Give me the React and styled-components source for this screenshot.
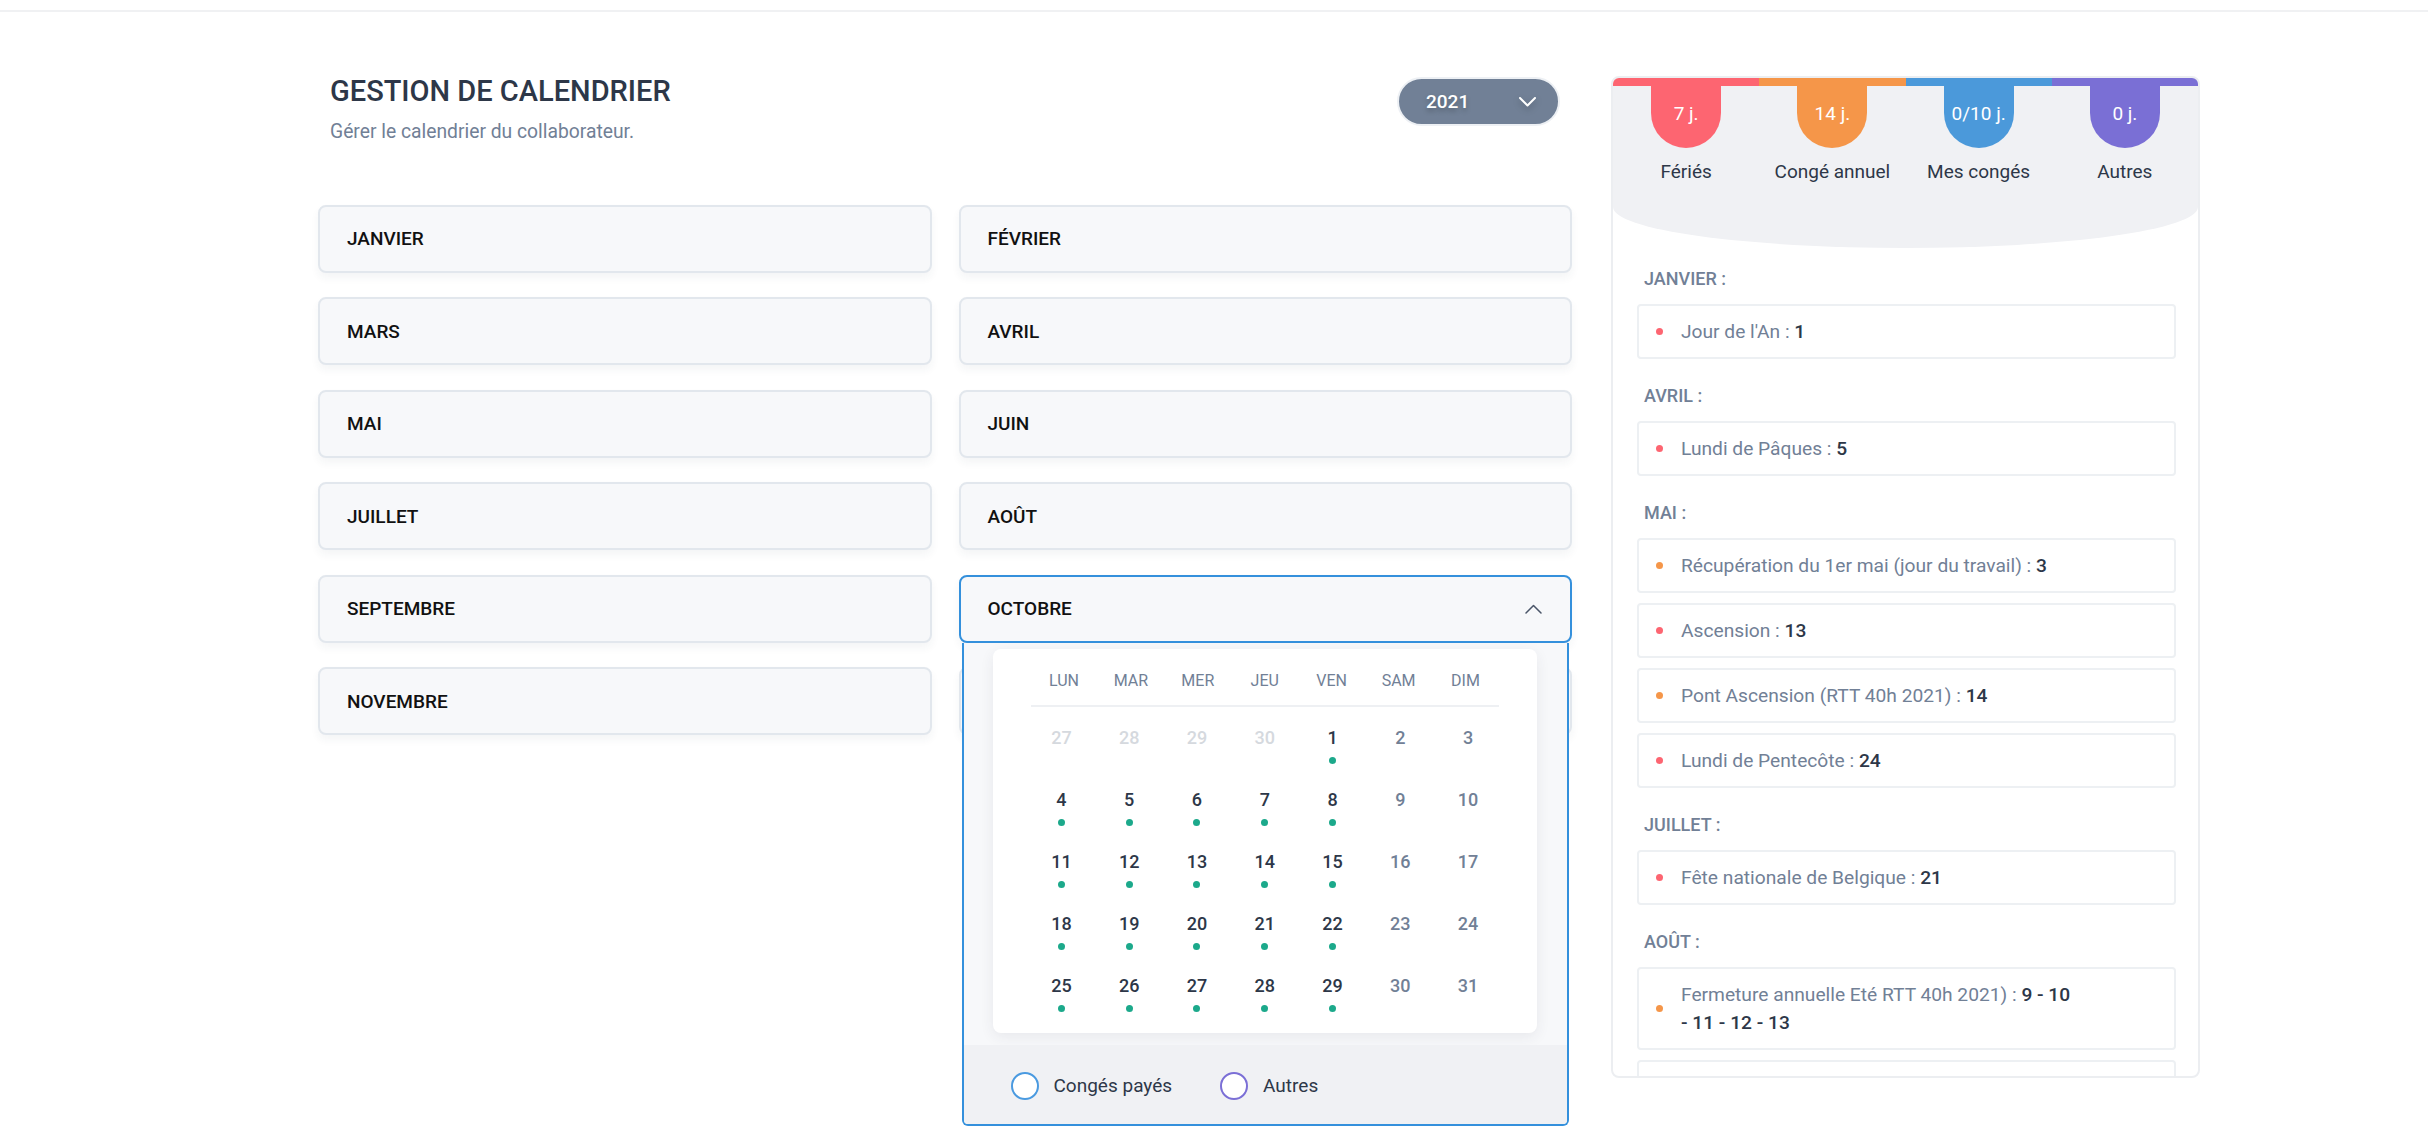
import React from 'react';
import styled, { createGlobalStyle } from 'styled-components';

const GlobalStyle = createGlobalStyle`
  * { box-sizing: border-box; }
  html, body { min-height: 100%; }
  body {
    margin: 0;
    background: #fff;
    font-family: Roboto, "Liberation Sans", sans-serif;
    color: #2d3748;
  }
`;

const Page = styled.div`
  min-height: 1148px;
`;

const TopBar = styled.div`
  height: 12px;
  border-bottom: 2px solid #f0f1f3;
`;

const Main = styled.main`
  display: flex;
  align-items: flex-start;
  gap: 39px;
  padding-left: 318px;
  padding-bottom: 60px;
`;

const LeftCol = styled.section`
  width: 1254px;
  padding-top: 62px;
`;

const Header = styled.header`
  display: flex;
  justify-content: space-between;
  align-items: flex-start;
  padding: 0 12px;
`;

const Title = styled.h1`
  margin: 0;
  font-size: 29px;
  line-height: 34px;
  font-weight: 500;
  color: #2d3748;
`;

const Subtitle = styled.p`
  margin: 13px 0 0;
  font-size: 19.3px;
  line-height: 22px;
  color: #718096;
`;

const YearPill = styled.button`
  margin-top: 3px;
  width: 163px;
  height: 49px;
  border-radius: 25px;
  background: #718096;
  border: 2px solid #edf0f4;
  display: flex;
  align-items: center;
  justify-content: space-between;
  padding: 0 22px 0 27px;
  color: #fff;
  font-family: Roboto, sans-serif;
  font-size: 19px;
  font-weight: 500;
  text-shadow: 0 3px 5px rgba(0, 0, 0, 0.25);

  svg {
    filter: drop-shadow(0 3px 3px rgba(0, 0, 0, 0.25));
  }
`;

const MonthGrid = styled.div`
  margin-top: 61.5px;
  display: grid;
  grid-template-columns: 1fr 1fr;
  column-gap: 27px;
  row-gap: 24.6px;
  grid-auto-rows: 68px;
`;

const MonthCard = styled.div`
  position: relative;
  z-index: ${(p) => (p.$open ? 2 : 1)};
`;

const MonthHead = styled.div`
  height: 68px;
  display: flex;
  align-items: center;
  justify-content: space-between;
  padding: 0 28px 0 27px;
  background: #f7f8fa;
  border: 2px solid ${(p) => (p.$open ? '#3490dc' : '#e2e7ed')};
  border-radius: 8px;
  box-shadow: 0 5px 9px rgba(45, 55, 72, 0.05);
  font-size: 19px;
  font-weight: 500;
  color: #111;
`;

const Dropdown = styled.div`
  position: absolute;
  top: 100%;
  left: 3px;
  right: 3px;
  background: #f7f8fa;
  border: 2px solid #3490dc;
  border-top: none;
  border-radius: 0 0 6px 6px;
`;

const CalendarCard = styled.div`
  margin: 6px 30px 0 29px;
  background: #fff;
  border-radius: 8px;
  box-shadow: 0 4px 14px rgba(45, 55, 72, 0.08);
  padding: 20px 35px 19px;
`;

const WeekRow = styled.div`
  display: grid;
  grid-template-columns: repeat(7, 1fr);
  padding-bottom: 12px;
  border-bottom: 2px solid #eef0f3;
  margin: 0 3px;
`;

const WeekDay = styled.span`
  text-align: center;
  font-size: 16px;
  line-height: 24px;
  color: #718096;
`;

const DaysGrid = styled.div`
  margin-top: 19px;
  display: grid;
  grid-template-columns: repeat(7, 1fr);
  row-gap: 22px;
`;

const DayCell = styled.div`
  height: 40px;
  display: flex;
  flex-direction: column;
  align-items: center;
`;

const DayNum = styled.span`
  font-size: 18px;
  line-height: 24px;
  font-weight: 500;
  color: ${(p) => (p.$kind === 'out' ? '#d5d9de' : p.$kind === 'weekend' ? '#718096' : '#2d3748')};
`;

const DayDot = styled.span`
  margin-top: 7px;
  width: 7px;
  height: 7px;
  border-radius: 50%;
  background: #1ca98b;
`;

const Legend = styled.div`
  margin-top: 12px;
  height: 79px;
  padding: 4px 0 0 47px;
  background: #f0f1f4;
  border-radius: 0 0 4px 4px;
  display: flex;
  align-items: center;
  gap: 48px;
`;

const LegendItem = styled.div`
  display: flex;
  align-items: center;
  gap: 15px;
  font-size: 19px;
  line-height: 28px;
  color: #2d3748;
`;

const LegendCircle = styled.span`
  width: 28px;
  height: 28px;
  border-radius: 50%;
  border: 2px solid ${(p) => p.$color};
  background: #fff;
`;

const Panel = styled.aside`
  width: 589px;
  height: 1002px;
  margin-top: 64px;
  border: 2px solid #eceef1;
  border-radius: 8px;
  overflow: hidden;
  background: #fff;
`;

const Summary = styled.div`
  height: 170px;
  background: #f0f1f4;
  display: grid;
  grid-template-columns: repeat(4, 1fr);
  border-radius: 0 0 50% 50% / 0 0 41px 41px;
`;

const SummaryCol = styled.div`
  display: flex;
  flex-direction: column;
  align-items: center;
  border-top: 8px solid ${(p) => p.$color};
`;

const Badge = styled.div`
  width: 70px;
  height: 62px;
  border-radius: 0 0 35px 35px;
  background: ${(p) => p.$color};
  color: #fff;
  text-align: center;
  padding-top: 16px;
  font-size: 19px;
  line-height: 24px;
`;

const SummaryLabel = styled.div`
  margin-top: 12px;
  font-size: 19px;
  line-height: 24px;
  color: #2d3748;
`;

const List = styled.div`
  padding: 20px 22px 0 24px;
`;

const GroupLabel = styled.div`
  margin: 26px 0 14px 7px;
  font-size: 18px;
  line-height: 22px;
  font-weight: 500;
  color: #718096;

  &:first-child {
    margin-top: 0;
  }
`;

const Items = styled.div`
  display: flex;
  flex-direction: column;
  gap: 10px;
`;

const Item = styled.div`
  min-height: 55px;
  display: flex;
  align-items: center;
  gap: 18px;
  padding: 11.5px 16px 11.5px 17px;
  border: 2px solid #edf0f3;
  border-radius: 4px;
  font-size: 19.2px;
  line-height: 28px;
  color: #718096;
`;

const ItemDot = styled.span`
  flex: none;
  width: 7px;
  height: 7px;
  border-radius: 50%;
  background: ${(p) => p.$color};
`;

const ItemValue = styled.b`
  font-weight: 500;
  color: #2d3748;
`;

const Chevron = ({ up, color = '#fff' }) => (
  <svg width="17" height="10" viewBox="0 0 17 10" fill="none">
    <polyline
      points={up ? '1,9 8.5,1.5 16,9' : '1,1 8.5,8.5 16,1'}
      stroke={color}
      strokeWidth={up ? 1.5 : 2}
      strokeLinecap="round"
      strokeLinejoin="round"
    />
  </svg>
);

const RED = '#fd6571';
const ORANGE = '#f59649';
const BLUE = '#4b99da';
const PURPLE = '#7a6fd5';

const months = [
  'JANVIER', 'FÉVRIER', 'MARS', 'AVRIL', 'MAI', 'JUIN',
  'JUILLET', 'AOÛT', 'SEPTEMBRE', 'OCTOBRE', 'NOVEMBRE', 'DÉCEMBRE',
];

const weekDays = ['LUN', 'MAR', 'MER', 'JEU', 'VEN', 'SAM', 'DIM'];

// octobre 2021 : commence un vendredi
const buildDays = () => {
  const days = [27, 28, 29, 30].map((n) => ({ n, kind: 'out' }));
  for (let n = 1; n <= 31; n++) {
    const col = (n + 3) % 7;
    days.push({ n, kind: col >= 5 ? 'weekend' : 'work' });
  }
  return days;
};

const summary = [
  { value: '7 j.', label: 'Fériés', color: RED },
  { value: '14 j.', label: 'Congé annuel', color: ORANGE },
  { value: '0/10 j.', label: 'Mes congés', color: BLUE },
  { value: '0 j.', label: 'Autres', color: PURPLE },
];

const holidays = [
  { month: 'JANVIER', items: [{ text: "Jour de l'An", value: '1', color: RED }] },
  { month: 'AVRIL', items: [{ text: 'Lundi de Pâques', value: '5', color: RED }] },
  {
    month: 'MAI',
    items: [
      { text: 'Récupération du 1er mai (jour du travail)', value: '3', color: ORANGE },
      { text: 'Ascension', value: '13', color: RED },
      { text: 'Pont Ascension (RTT 40h 2021)', value: '14', color: ORANGE },
      { text: 'Lundi de Pentecôte', value: '24', color: RED },
    ],
  },
  { month: 'JUILLET', items: [{ text: 'Fête nationale de Belgique', value: '21', color: RED }] },
  {
    month: 'AOÛT',
    items: [
      { text: 'Fermeture annuelle Eté RTT 40h 2021)', value: ['9 - 10', '- 11 - 12 - 13'], color: ORANGE },
      { text: 'Assomption', value: '15', color: RED },
    ],
  },
];

const CalendarDropdown = () => (
  <Dropdown>
    <CalendarCard>
      <WeekRow>
        {weekDays.map((d) => (
          <WeekDay key={d}>{d}</WeekDay>
        ))}
      </WeekRow>
      <DaysGrid>
        {buildDays().map((d, i) => (
          <DayCell key={i}>
            <DayNum $kind={d.kind}>{d.n}</DayNum>
            {d.kind === 'work' && <DayDot />}
          </DayCell>
        ))}
      </DaysGrid>
    </CalendarCard>
    <Legend>
      <LegendItem>
        <LegendCircle $color="#4a9ae0" />
        <span>Congés payés</span>
      </LegendItem>
      <LegendItem>
        <LegendCircle $color="#7b6fd6" />
        <span>Autres</span>
      </LegendItem>
    </Legend>
  </Dropdown>
);

const App = () => {
  const openMonth = 'OCTOBRE';

  return (
    <Page>
      <GlobalStyle />
      <TopBar />
      <Main>
        <LeftCol>
          <Header>
            <div>
              <Title>GESTION DE CALENDRIER</Title>
              <Subtitle>Gérer le calendrier du collaborateur.</Subtitle>
            </div>
            <YearPill>
              2021
              <Chevron />
            </YearPill>
          </Header>

          <MonthGrid>
            {months.map((m) => {
              const open = m === openMonth;
              return (
                <MonthCard key={m} $open={open}>
                  <MonthHead $open={open}>
                    {m}
                    {open && <Chevron up color="#4a5568" />}
                  </MonthHead>
                  {open && <CalendarDropdown />}
                </MonthCard>
              );
            })}
          </MonthGrid>
        </LeftCol>

        <Panel>
          <Summary>
            {summary.map((s) => (
              <SummaryCol key={s.label} $color={s.color}>
                <Badge $color={s.color}>{s.value}</Badge>
                <SummaryLabel>{s.label}</SummaryLabel>
              </SummaryCol>
            ))}
          </Summary>
          <List>
            {holidays.map((g) => (
              <React.Fragment key={g.month}>
                <GroupLabel>{g.month} :</GroupLabel>
                <Items>
                  {g.items.map((it) => (
                    <Item key={it.text}>
                      <ItemDot $color={it.color} />
                      <span>
                        {it.text} :{' '}
                        {Array.isArray(it.value) ? (
                          <ItemValue>
                            {it.value[0]}
                            <br />
                            {it.value[1]}
                          </ItemValue>
                        ) : (
                          <ItemValue>{it.value}</ItemValue>
                        )}
                      </span>
                    </Item>
                  ))}
                </Items>
              </React.Fragment>
            ))}
          </List>
        </Panel>
      </Main>
    </Page>
  );
};

export default App;
